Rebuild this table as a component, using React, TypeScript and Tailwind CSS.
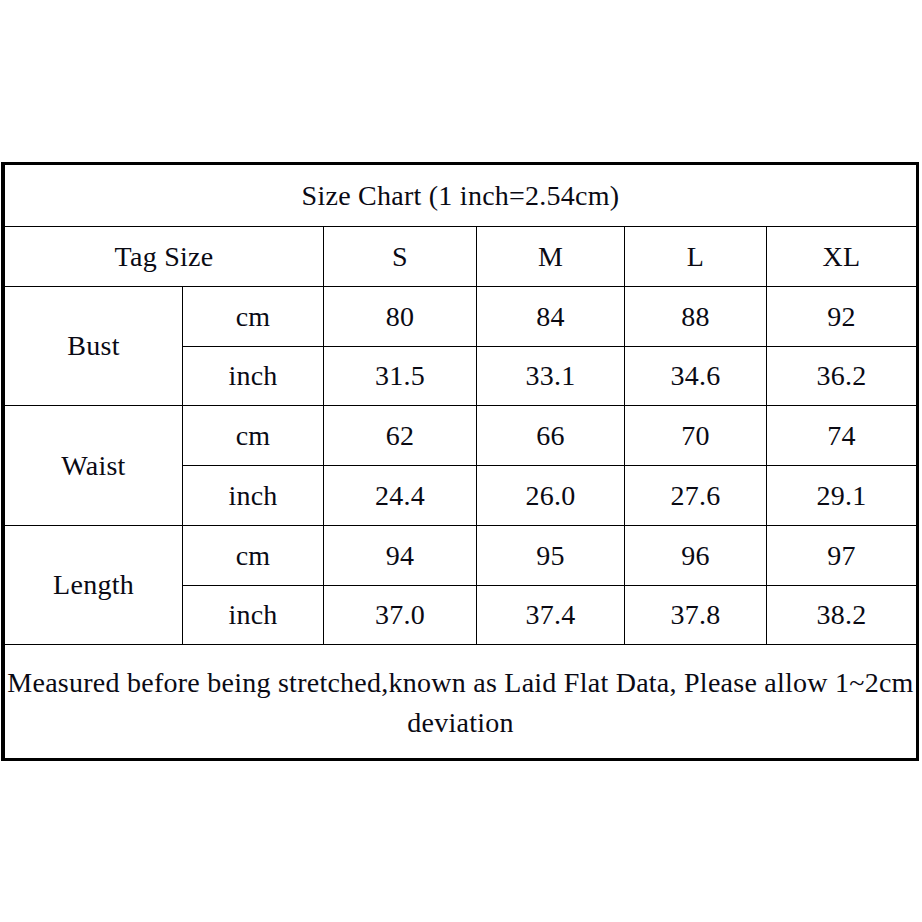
import React from "react";

const sizes = ["S", "M", "L", "XL"];

const groups = [
  { name: "Bust", cm: ["80", "84", "88", "92"], inch: ["31.5", "33.1", "34.6", "36.2"] },
  { name: "Waist", cm: ["62", "66", "70", "74"], inch: ["24.4", "26.0", "27.6", "29.1"] },
  { name: "Length", cm: ["94", "95", "96", "97"], inch: ["37.0", "37.4", "37.8", "38.2"] },
];

function Cell({ children, className = "" }: { children?: React.ReactNode; className?: string }) {
  return (
    <div className={"bg-white flex items-center justify-center text-center " + className}>
      {children}
    </div>
  );
}

export default function App() {
  return (
    <div className="w-[922px] h-[922px] bg-white pt-[162px] pl-[1px]">
      <div className="w-[918px] border-[3px] border-l-4 border-black bg-black font-['Liberation_Serif','Times_New_Roman',serif] text-[28px] tracking-[0.25px] text-[#0a0a14] leading-none">
        <div className="grid grid-cols-[177px_140px_152px_147px_141px_149px] grid-rows-[61px_59px_59px_58px_59px_59px_59px_58px_113px] gap-px">
          <Cell className="col-span-6">Size Chart (1 inch=2.54cm)</Cell>

          <Cell className="col-span-2">Tag Size</Cell>
          {sizes.map((s) => (
            <Cell key={s}>{s}</Cell>
          ))}

          {groups.map((g) => (
            <React.Fragment key={g.name}>
              <Cell className="row-span-2">{g.name}</Cell>
              <Cell>cm</Cell>
              {g.cm.map((v, i) => (
                <Cell key={"c" + i}>{v}</Cell>
              ))}
              <Cell>inch</Cell>
              {g.inch.map((v, i) => (
                <Cell key={"i" + i}>{v}</Cell>
              ))}
            </React.Fragment>
          ))}

          <Cell className="col-span-6 items-start pt-[18px] leading-[40px]">
            <p className="w-full">
              Measured before being stretched,known as Laid Flat Data, Please allow 1~2cm deviation
            </p>
          </Cell>
        </div>
      </div>
    </div>
  );
}
